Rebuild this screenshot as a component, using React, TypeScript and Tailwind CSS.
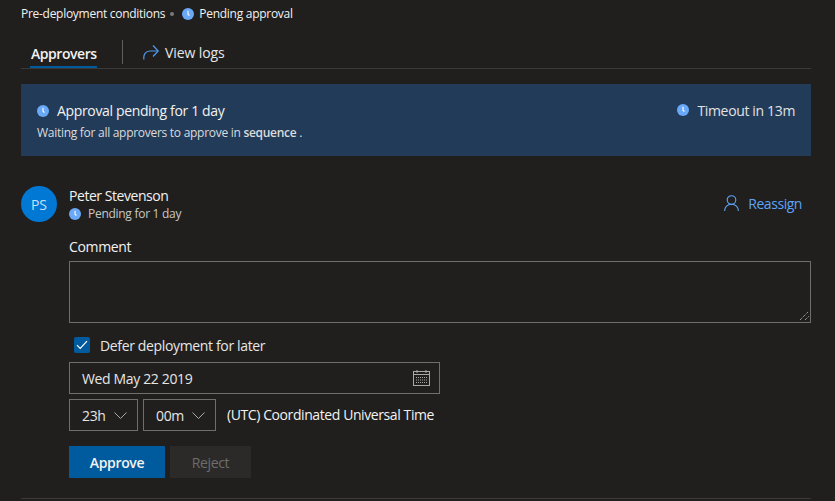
function PendingIcon({ size = 12 }: { size?: number }) {
  return (
    <svg width={size} height={size} viewBox="0 0 12 12" className="shrink-0">
      <circle cx="6" cy="6" r="6" fill="#69a9f8" />
      <path d="M6 2.8v3.4l1.4 1.5" fill="none" stroke="#ffffff" strokeWidth="1.1" />
    </svg>
  );
}

function ViewLogsIcon() {
  return (
    <svg width="16" height="16" viewBox="0 0 16 16" fill="none" stroke="#4f9cf0" strokeWidth="1.2" className="shrink-0">
      <path d="M1 15.5c-1-4.500 1.500-8.500 6-8.500h8" />
      <path d="M10 1.500L15.200 7 10 12.500" />
    </svg>
  );
}

function PersonIcon() {
  return (
    <svg width="15" height="16" viewBox="0 0 15 16" fill="none" stroke="#5ea4f5" strokeWidth="1.1" className="shrink-0">
      <circle cx="7.500" cy="5" r="4.300" />
      <path d="M0.600 16c0-3.800 2.800-6.700 6.900-6.700s6.900 2.900 6.900 6.700" />
    </svg>
  );
}

function Chevron() {
  return (
    <svg width="13" height="7" viewBox="0 0 13 7" fill="none" stroke="#a8a8a8" strokeWidth="1" className="shrink-0">
      <path d="M0.500 0.500L6.500 6.500 12.500 0.500" />
    </svg>
  );
}

function CheckMark() {
  return (
    <svg width="12" height="10" viewBox="0 0 12 10" fill="none" stroke="#ffffff" strokeWidth="1.200">
      <path d="M1 5.200L4.200 8.500 11 1.200" />
    </svg>
  );
}

function CalendarIcon() {
  return (
    <svg width="17" height="16" viewBox="0 0 17 16" fill="none" stroke="#a8a8a8" strokeWidth="1" className="shrink-0">
      <rect x="0.500" y="1.500" width="16" height="14" />
      <path d="M0.500 4.500h16" />
      <path d="M4 0v3M13 0v3" />
      <path d="M3 7.500h11M3 10h11M3 12.500h11" strokeDasharray="1 1" />
    </svg>
  );
}

function ResizeGrip() {
  return (
    <svg width="9" height="9" viewBox="0 0 9 9" stroke="#c8c8c8" strokeWidth="1" strokeDasharray="1 1" className="absolute bottom-[2px] right-[1px]">
      <path d="M0 9L8 1" />
      <path d="M5 9L9 5" />
    </svg>
  );
}

function TimeSelect({ value, width }: { value: string; width: string }) {
  return (
    <div className={`flex h-[32px] ${width} items-center justify-between border border-[#6e6e6e] pl-[12px] pr-[10px] text-[14px] text-[#e6e6e6]`}>
      <span>{value}</span>
      <Chevron />
    </div>
  );
}

export default function App() {
  return (
    <div className="h-[501px] w-[835px] overflow-hidden bg-[#201f1e] pl-[21px] pr-[24px] font-['Open_Sans','Noto_Sans',sans-serif] tracking-[-0.35px] text-[#f3f2f1]">
      <div className="flex h-[28px] items-center text-[12px] tracking-[-0.28px]">
        <span>Pre-deployment conditions</span>
        <span className="ml-[5px] mr-[8px] h-[4px] w-[4px] rounded-full bg-[#7a7a7a]" />
        <PendingIcon />
        <span className="ml-[5px]">Pending approval</span>
      </div>

      <div className="flex h-[41px] items-end border-b border-[#3b3a39]">
        <div className="ml-[9px] flex h-[25px] w-[67px] flex-col justify-between">
          <span className="pl-[1px] text-[14px] font-semibold leading-[22px] tracking-[-0.45px]">Approvers</span>
          <span className="h-[2px] w-[67px] bg-[#005a9e]" />
        </div>
        <span className="mb-[4px] ml-[25px] h-[24px] w-px bg-[#605e5c]" />
        <div className="mb-[4px] ml-[20px] flex h-[24px] items-center gap-[6px] text-[14px] tracking-[-0.1px] text-[#e6e6e6]">
          <ViewLogsIcon />
          <span>View logs</span>
        </div>
      </div>

      <div className="mt-[15px] flex h-[72px] items-start justify-between bg-[#223b59] px-[16px] pt-[16px]">
        <div>
          <div className="flex h-[22px] items-center gap-[8px] text-[14px]">
            <PendingIcon />
            <span className="-mt-[1px]">Approval pending for 1 day</span>
          </div>
          <p className="mt-[2px] text-[12px] leading-[18px] tracking-[-0.28px] text-[#dcdcdc]">
            Waiting for all approvers to approve in <span className="font-semibold">sequence</span> .
          </p>
        </div>
        <div className="-mt-[1px] flex h-[22px] items-center gap-[8px] text-[14px] text-[#e1e1e1]">
          <PendingIcon />
          <span>Timeout in 13m</span>
        </div>
      </div>

      <div className="mt-[30px] flex">
        <div className="flex h-[36px] w-[36px] items-center justify-center rounded-full bg-[#0078d4] text-[14px] tracking-normal text-[#c7e0f4]">PS</div>
        <div className="ml-[12px] flex-1">
          <div className="flex items-start justify-between">
            <div>
              <div className="text-[14px] leading-[20px] tracking-[-0.45px]">Peter Stevenson</div>
              <div className="flex h-[16px] items-center gap-[7px] text-[12px] tracking-[-0.28px] text-[#c8c8c8]">
                <PendingIcon />
                <span>Pending for 1 day</span>
              </div>
            </div>
            <div className="mr-[9px] mt-[7px] flex h-[20px] items-center gap-[9px] text-[14px] tracking-[-0.45px] text-[#5ea4f5]">
              <PersonIcon />
              <span>Reassign</span>
            </div>
          </div>

          <div className="mt-[15px] text-[14px] leading-[20px]">Comment</div>
          <div className="relative mt-[4px] h-[62px] border border-[#6e6e6e]">
            <ResizeGrip />
          </div>

          <div className="ml-[5px] mt-[12px] flex h-[20px] items-center gap-[10px] text-[14px] text-[#e6e6e6]">
            <span className="flex h-[16px] w-[16px] items-center justify-center rounded-[2px] bg-[#005a9e]">
              <CheckMark />
            </span>
            <span>Defer deployment for later</span>
          </div>

          <div className="mt-[7px] flex h-[32px] w-[371px] items-center justify-between border border-[#6e6e6e] pl-[12px] pr-[9px] text-[14px] text-[#e6e6e6]">
            <span>Wed May 22 2019</span>
            <CalendarIcon />
          </div>

          <div className="mt-[5px] flex items-center gap-[5px]">
            <TimeSelect value="23h" width="w-[69px]" />
            <TimeSelect value="00m" width="w-[73px]" />
            <span className="-mt-[2px] ml-[6px] text-[14px] tracking-[-0.41px] text-[#f3f2f1]">(UTC) Coordinated Universal Time</span>
          </div>

          <div className="mt-[15px] flex gap-[5px]">
            <div className="flex h-[32px] w-[96px] items-center justify-center bg-[#005a9e] text-[14px] font-semibold text-[#f3f2f1]">Approve</div>
            <div className="flex h-[32px] w-[81px] items-center justify-center bg-[#2b2a29] text-[14px] text-[#6e6d6c]">Reject</div>
          </div>
        </div>
      </div>

      <div className="mt-[20px] h-px bg-[#3b3a39]" />
    </div>
  );
}
